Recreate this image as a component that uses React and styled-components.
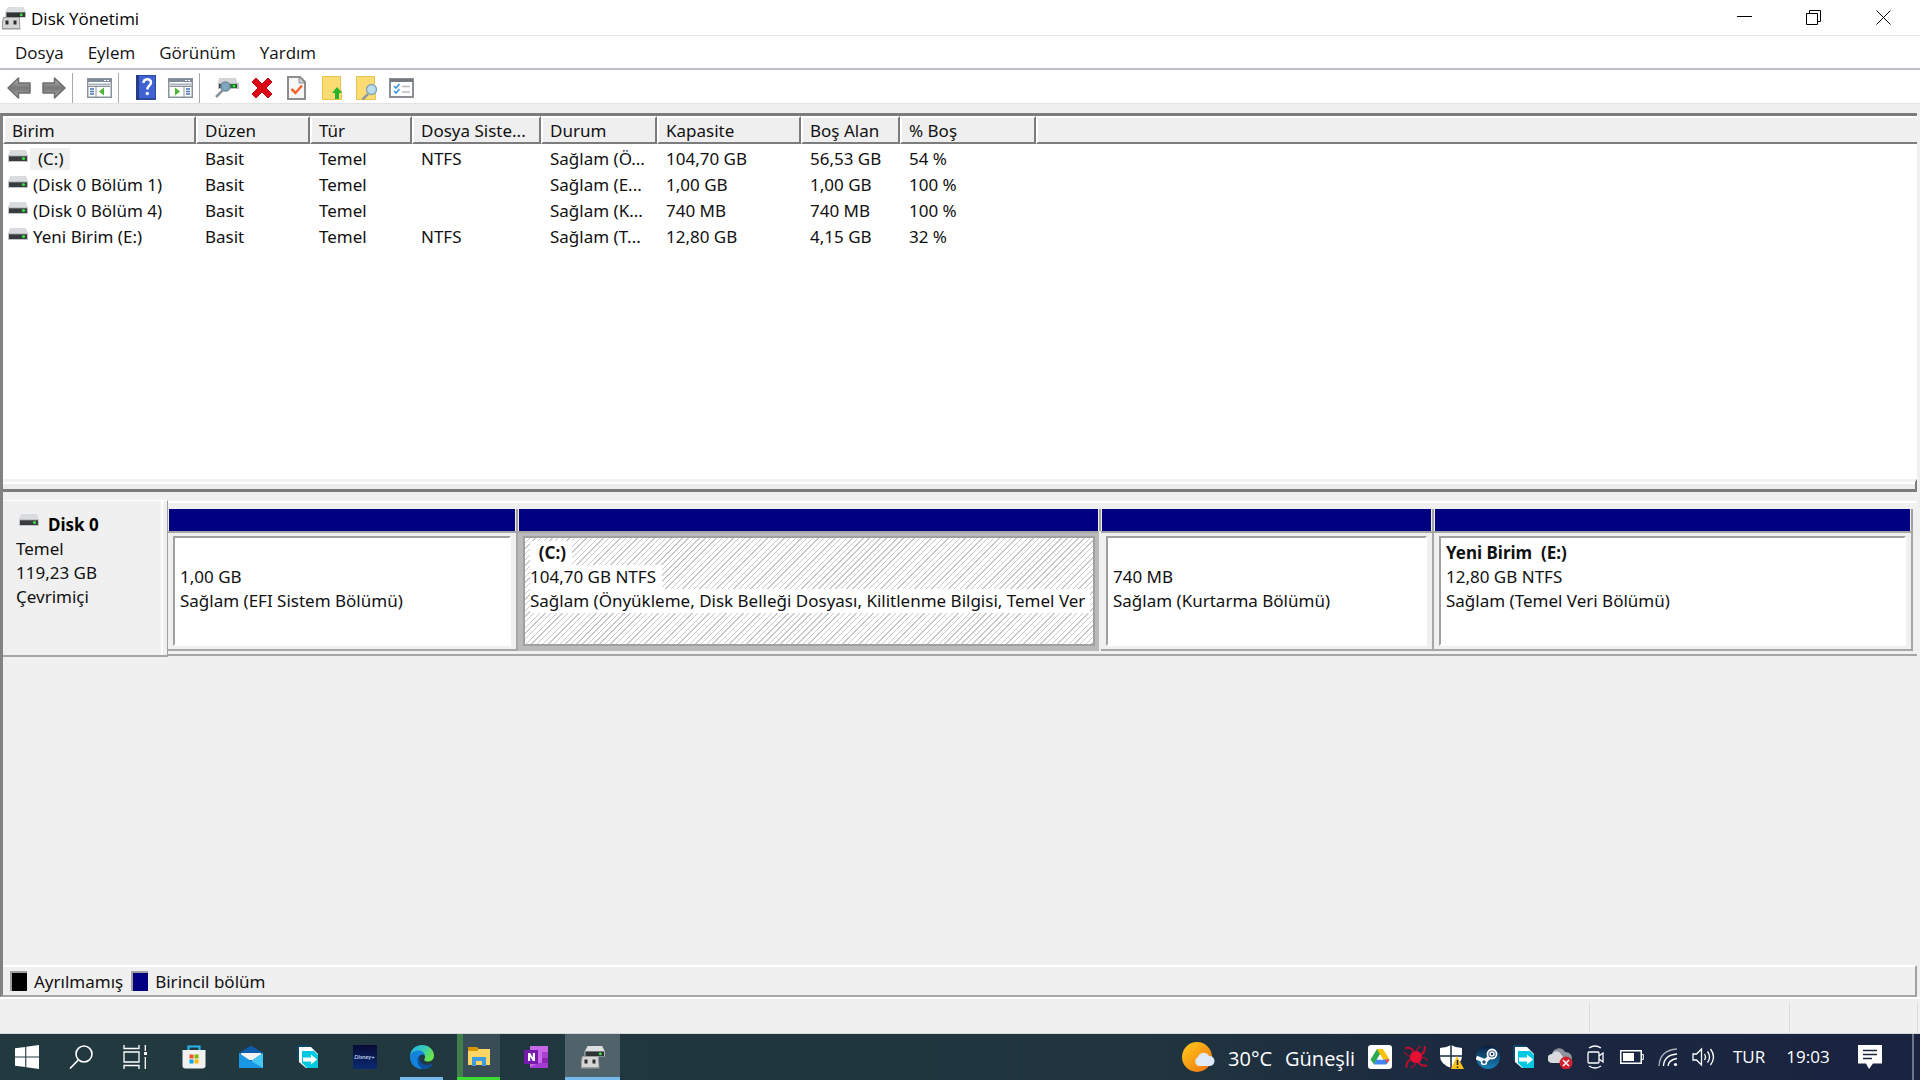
import React from "react";
import styled, { createGlobalStyle } from "styled-components";

const GlobalStyle = createGlobalStyle`
  * {
    box-sizing: border-box;
  }
  body {
    margin: 0;
    background: #f0f0f0;
    color: #111;
    font-family: "Open Sans", "Noto Sans", sans-serif;
    font-size: 17px;
    line-height: 24px;
  }
  button {
    font: inherit;
    color: inherit;
    border: none;
    background: none;
    padding: 0;
  }
  svg {
    display: block;
  }
`;

const Desktop = styled.div`
  display: flex;
  flex-direction: column;
  min-height: 100vh;
`;

const Window = styled.main`
  display: flex;
  flex-direction: column;
  flex: 1;
`;

const TitleBar = styled.header`
  display: flex;
  align-items: center;
  height: 36px;
  padding: 0 1px 0 2px;
  background: #fff;
  border-bottom: 1px solid #e6e6e6;
`;

const Title = styled.h1`
  flex: 1;
  margin: 0 0 0 5px;
  padding-top: 2px;
  font-size: 17px;
  font-weight: 400;
  color: #000;
`;

const WindowButton = styled.button`
  display: flex;
  align-items: center;
  justify-content: center;
  width: 70px;
  height: 34px;
`;

const MenuBar = styled.nav`
  display: flex;
  gap: 24px;
  height: 34px;
  padding: 1px 15px 0;
  background: #fff;
  border-bottom: 2px solid #bcc0c4;
`;

const ToolBar = styled.div`
  display: flex;
  align-items: center;
  height: 34px;
  padding: 2px 0 0 1px;
  background: #fff;
  border-bottom: 1px solid #e2e2e2;
`;

const ToolButton = styled.button`
  display: flex;
  align-items: center;
  justify-content: center;
  width: 35px;
  height: 30px;
`;

const ToolSeparator = styled.span`
  width: 1px;
  height: 30px;
  margin: 0 9px 0 1px;
  background: #a8a8a8;
`;

const Workspace = styled.div`
  display: flex;
  flex-direction: column;
  flex: 1;
  margin: 9px 3px 0 0;
  border-top: 3px solid #7c7c7c;
  border-left: 3px solid #828282;
  border-bottom: 2px solid #a6a6a6;
  font-family: "Noto Sans", "Open Sans", sans-serif;
`;

const ListPane = styled.section`
  flex: 367 1 0;
  background: #fff;
`;

const VolumeTable = styled.table`
  width: 100%;
  table-layout: fixed;
  border-collapse: separate;
  border-spacing: 0;
  text-align: left;
  line-height: 22px;

  th {
    height: 28px;
    padding: 2px 0 0 7px;
    font-weight: 400;
    background: #efefef;
    border-top: 2px solid #fff;
    border-left: 2px solid #fff;
    border-right: 2px solid #7c7c7c;
    border-bottom: 2px solid #7c7c7c;
    white-space: nowrap;
  }
  th:last-child {
    border-right: none;
  }
  td {
    height: 26px;
    padding: 3px 0 0 9px;
    white-space: nowrap;
  }
  td:first-child {
    padding-left: 5px;
  }
`;

const VolumeName = styled.div`
  display: flex;
  align-items: center;
  gap: 2px;

  svg {
    margin-bottom: 4px;
  }
`;

const VolumeLabel = styled.span`
  padding: ${(p) => (p.$selected ? "0 6px 0 8px" : "0 3px")};
  background: ${(p) => (p.$selected ? "#f0f0f0" : "none")};
`;

const Splitter = styled.div`
  height: 13px;
  background: #ececec;
  border-top: 3px solid #f2f2f2;
  border-right: 2px solid #7c7c7c;
  border-bottom: 3px solid #7c7c7c;
  box-shadow: inset 0 2px #fff;
`;

const GraphPane = styled.section`
  display: flex;
  flex-direction: column;
  flex: 501 1 0;
  padding-top: 8px;
`;

const DiskRow = styled.div`
  display: flex;
`;

const DiskInfo = styled.div`
  width: 165px;
  height: 157px;
  padding: 10px 0 0 13px;
  border-top: 1px solid #fff;
  border-right: 1px solid #a0a0a0;
  border-bottom: 2px solid #a6a6a6;
  box-shadow: inset -4px 0 #f0f0f0, inset -6px 0 #fff;
`;

const DiskName = styled.div`
  display: flex;
  align-items: center;
  gap: 9px;
  padding-left: 3px;
  margin-top: 2px;
  font-weight: 700;
  color: #000;

  svg {
    margin-bottom: 8px;
  }
`;

const Partitions = styled.div`
  display: flex;
  flex: 1;
  min-width: 0;
  height: 155px;
  margin: 1px 0;
  padding: 6px 4px 0 0;
  border-top: 2px solid #fff;
  border-bottom: 2px solid #a6a6a6;
`;

const Partition = styled.div`
  display: flex;
  flex-direction: column;
  flex: ${(p) => p.$share} 1 0;
  min-width: 0;
`;

const PartitionBar = styled.div`
  height: 22px;
  margin-left: 1px;
  background: #000080;
  border-right: 2px solid #a0a0a0;
  box-shadow: inset -1px 0 #f0f0f0;
`;

const PartitionFrame = styled.div`
  height: 120px;
  margin-right: ${(p) => (p.$selected ? "2px" : "0")};
  padding: ${(p) => (p.$selected ? "3px 2px 5px 5px" : "3px 5px 5px")};
  background: ${(p) => (p.$selected ? "#bababa" : "#f0f0f0")};
  border-top: 2px solid #a6a6a6;
  border-right: 2px solid ${(p) => (p.$selected ? "#bababa" : "#a6a6a6")};
  border-bottom: 2px solid ${(p) => (p.$selected ? "#bababa" : "#a6a6a6")};
`;

const PartitionBody = styled.div`
  height: 110px;
  padding: 3px 3px 0 5px;
  overflow: hidden;
  border: 2px solid #a0a0a0;
  border-right-color: ${(p) => (p.$selected ? "#a0a0a0" : "#fff")};
  border-bottom-color: ${(p) => (p.$selected ? "#a0a0a0" : "#fff")};
  background: ${(p) =>
    p.$selected
      ? "repeating-linear-gradient(135deg, #fff 0 3px, #c8c8c8 3px 4px)"
      : "#fff"};
`;

const PartitionLine = styled.div`
  height: 24px;
  overflow: hidden;
  white-space: pre;
  font-weight: ${(p) => (p.$bold ? 700 : 400)};

  span {
    display: inline-block;
    padding-right: 6px;
    background: #fff;
  }
`;

const Legend = styled.div`
  display: flex;
  align-items: center;
  gap: 8px;
  height: 30px;
  margin-top: auto;
  padding: 2px 0 0 7px;
  border-top: 2px solid #fff;
  border-right: 2px solid #a0a0a0;
`;

const LegendItem = styled.span`
  display: flex;
  align-items: center;
  gap: 7px;
`;

const Swatch = styled.i`
  width: 17px;
  height: 20px;
  margin-bottom: 3px;
  border-top: 2px solid #a0a0a0;
  border-left: 2px solid #a0a0a0;
  background: ${(p) => p.$color};
`;

const StatusBar = styled.footer`
  display: grid;
  grid-template-columns: 1fr 200px 128px;
  height: 37px;
  padding: 5px 2px 0 0;
  border-bottom: 1px solid #d8d8d8;
  box-shadow: inset 0 2px #fff;

  span {
    border-right: 1px solid #dcdcdc;
  }
`;

const TaskBar = styled.div`
  display: flex;
  justify-content: space-between;
  height: 46px;
  color: #fff;
  background: linear-gradient(90deg, #22393f, #20353f 60%, #1b2840 78%, #1a2340);
`;

const TaskGroup = styled.div`
  display: flex;
`;

const PinnedApps = styled(TaskGroup)`
  margin-left: 3px;
`;

const SystemButton = styled.button`
  display: flex;
  align-items: center;
  justify-content: center;
  width: 54px;
  height: 46px;
`;

const AppButton = styled.button`
  display: flex;
  align-items: center;
  justify-content: center;
  width: ${(p) => (p.$active ? "55px" : "43px")};
  height: 46px;
  margin: ${(p) => (p.$active ? "0 1px" : "0 7px")};
  padding-top: ${(p) => (p.$running ? "3px" : "0")};
  border-bottom: ${(p) => (p.$running ? "3px solid #76b9ed" : "none")};
  background: ${(p) => (p.$active ? "#50636a" : "none")};
`;

const ProgressButton = styled(AppButton)`
  padding-left: 1px;
  border-bottom-color: #3ddc35;
  background: linear-gradient(90deg, #407e4c 6px, #394d56 6px);
`;

const Tray = styled.div`
  display: flex;
  align-items: center;
`;

const Weather = styled.button`
  display: flex;
  align-items: center;
  gap: 13px;
  margin-right: 7px;
  font-size: 20px;

  span {
    padding-top: 3px;
  }
`;

const TrayButton = styled.button`
  display: flex;
  align-items: center;
  justify-content: center;
  width: 36px;
  height: 46px;
`;

const TrayText = styled.button`
  width: ${(p) => p.$width}px;
  height: 46px;
  text-align: center;
`;

const Notifications = styled(TrayButton)`
  width: 60px;
  margin-right: 12px;
`;

const ShowDesktop = styled.button`
  width: 8px;
  height: 46px;
  border-left: 2px solid #6d7488;
`;

const DriveIcon = () => (
  <svg width="20" height="13" viewBox="0 0 20 13">
    <path d="M2 0h16l2 6H0z" fill="#d9dbde" />
    <path d="M0 5h20v7H0z" fill="#c2c5c8" />
    <path d="M1 6h18v5H1z" fill="#393c3e" />
    <path d="M1 6h18v1H1z" fill="#606365" />
    <circle cx="15.500" cy="8.500" r="1.600" fill="#31e33b" />
  </svg>
);

const DiskManagerIcon = () => (
  <svg width="24" height="24" viewBox="0 0 24 24">
    <path d="M6.500 1h14.500l3 5.500v5H3.500v-5z" fill="#b4b6b8" />
    <path d="M7 1h14l2.500 5h-19z" fill="#dcdee0" />
    <path d="M4.500 6.500h18.500v4.500H4.500z" fill="#303335" />
    <circle cx="19.300" cy="8.800" r="1.500" fill="#35df3d" />
    <path d="M1 11h17v5l.5 7.500H0V16z" fill="#9d9d9d" />
    <path d="M2 12h15v5l.5 5H1v-5z" fill="#d6d6d6" />
    <path d="M3.500 14.500h3v4h-3zM11.500 14.500h3v4h-3z" fill="#2d2d2d" />
  </svg>
);

const ArrowIcon = ({ right }) => (
  <svg width="24" height="22" viewBox="0 0 24 22">
    <defs>
      <linearGradient id={right ? "arrowR" : "arrowL"} x1="0" y1="0" x2="0" y2="1">
        <stop offset="0" stopColor="#b5b5b5" />
        <stop offset="0.500" stopColor="#777" />
        <stop offset="1" stopColor="#aaa" />
      </linearGradient>
    </defs>
    <path
      d={right ? "M23 11L12.500 1v5H1v10h11.500v5z" : "M1 11L11.500 1v5H23v10H11.500v5z"}
      fill={`url(#${right ? "arrowR" : "arrowL"})`}
      stroke="#6e6e6e"
      strokeWidth="1.500"
      strokeLinejoin="round"
    />
  </svg>
);

const ConsoleIcon = ({ right }) => (
  <svg width="25" height="20" viewBox="0 0 25 20">
    <path d="M.75.750h23.500v18.500H.75z" fill="#fff" stroke="#8b929b" strokeWidth="1.500" />
    <path d="M1 1h23v3H1z" fill="#7f8b9b" />
    <path d="M2 6.500h21" stroke="#a9b2bd" strokeWidth="2" />
    <path d="M17 2h2v1h-2zM20 2h2v1h-2z" fill="#fff" />
    {right ? (
      <g>
        <path d="M16 8v11M2 8.500h22" stroke="#8b929b" />
        <path d="M18 11h4M18 13.500h4M18 16h4" stroke="#3f76b5" strokeWidth="1.500" />
        <path d="M7 9.500v8l5-4z" fill="#4cb62e" />
      </g>
    ) : (
      <g>
        <path d="M9 8v11M1 8.500h22" stroke="#8b929b" />
        <path d="M3 11h4M3 13.500h4M3 16h4" stroke="#3f76b5" strokeWidth="1.500" />
        <path d="M17 9.500v8l-5-4z" fill="#4cb62e" />
      </g>
    )}
  </svg>
);

const HelpIcon = () => (
  <svg width="20" height="25" viewBox="0 0 20 25">
    <path d="M0 0h20v25H0z" fill="#2c4a9e" />
    <path d="M3 1h16v22H3z" fill="#3f62d2" />
    <path d="M0 0h3v25H0z" fill="#243c88" />
    <path
      d="M7.500 8c0-5 7.500-5 7.500-.5 0 3-3.700 3.500-3.700 7"
      fill="none"
      stroke="#fff"
      strokeWidth="2.500"
    />
    <circle cx="11.300" cy="18.500" r="1.700" fill="#fff" />
  </svg>
);

const RescanIcon = () => (
  <svg width="24" height="21" viewBox="0 0 24 21">
    <path d="M4 1h17l2 6H3z" fill="#d2d4d6" />
    <path d="M3 6h21v6H3z" fill="#bfc2c4" />
    <path d="M4 7h18v4H4z" fill="#3b3f42" />
    <path d="M16 7h5v4h-5z" fill="#1f7d2b" />
    <path d="M18 8h2v2h-2z" fill="#38ef45" />
    <path d="M7.500 13.500L1 20" stroke="#8b9298" strokeWidth="2.500" />
    <circle cx="10.500" cy="9.500" r="4.500" fill="#7fa6bd" stroke="#6d8b9c" strokeWidth="1.500" />
  </svg>
);

const DeleteIcon = () => (
  <svg width="22" height="22" viewBox="0 0 22 22">
    <path
      d="M5 1l6 6 6-6 4 4-6 6 6 6-4 4-6-6-6 6-4-4 6-6-6-6z"
      fill="#dc0a14"
      stroke="#b80710"
    />
  </svg>
);

const CheckPageIcon = () => (
  <svg width="19" height="24" viewBox="0 0 19 24">
    <path d="M1 1h12l5 5v17H1z" fill="#f7f7f7" stroke="#8d8d8d" strokeWidth="2" />
    <path d="M12 1v6h6z" fill="#d2d2d2" stroke="#8d8d8d" />
    <path d="M4.500 13l4 4L15 9.500" fill="none" stroke="#f4622d" strokeWidth="2.500" />
  </svg>
);

const UpFolderIcon = () => (
  <svg width="20" height="24" viewBox="0 0 20 24">
    <path d="M.5.500h18v14h1v9H.5z" fill="#fbdc72" stroke="#e6c24e" />
    <path d="M15 11l5 6h-3v6h-4v-6h-3z" fill="#27b32c" />
  </svg>
);

const FindFolderIcon = () => (
  <svg width="22" height="24" viewBox="0 0 22 24">
    <path d="M.5.500h18v14h1v9H.5z" fill="#fbdc72" stroke="#e6c24e" />
    <path d="M12 18l-5.500 5.500" stroke="#8f9aa0" strokeWidth="2.500" />
    <circle cx="15.500" cy="13.500" r="5" fill="#b9def0" stroke="#8ba7b5" strokeWidth="1.500" />
  </svg>
);

const ChecklistIcon = () => (
  <svg width="25" height="20" viewBox="0 0 25 20">
    <path d="M1 1h23v18H1z" fill="#fff" stroke="#8b8f94" strokeWidth="2" />
    <path d="M1 2.500h23" stroke="#747a80" strokeWidth="3" />
    <path d="M5 8l2 2 3.500-4M5 13l2 2 3.500-4" fill="none" stroke="#3a92e0" strokeWidth="1.600" />
    <path d="M13 8.500h8M13 14h8" stroke="#bbb" strokeWidth="1.500" />
  </svg>
);

const MinimizeIcon = () => (
  <svg width="16" height="16" viewBox="0 0 16 16">
    <path d="M1 6.500h15" stroke="#000" />
  </svg>
);

const RestoreIcon = () => (
  <svg width="16" height="16" viewBox="0 0 16 16" fill="none" stroke="#000">
    <path d="M.5 3.500h11v11H.5zM3.500 3.500v-3h11v11h-3" />
  </svg>
);

const CloseIcon = () => (
  <svg width="16" height="16" viewBox="0 0 16 16">
    <path d="M.5.500l14 14M14.500.500l-14 14" stroke="#000" />
  </svg>
);

const StartIcon = () => (
  <svg width="24" height="24" viewBox="0 0 24 24" fill="#fff">
    <path d="M0 3.300L10.200 2v9.500H0zM11.300 1.800L24 0v11.500H11.300zM0 12.500h10.200V22L0 20.700zM11.300 12.500H24V24l-12.700-1.800z" />
  </svg>
);

const SearchIcon = () => (
  <svg width="24" height="24" viewBox="0 0 24 24" fill="none" stroke="#fff" strokeWidth="1.600">
    <circle cx="15" cy="9" r="8" />
    <path d="M9.500 14.700L1 23.500" />
  </svg>
);

const TaskViewIcon = () => (
  <svg width="24" height="24" viewBox="0 0 24 24" fill="none" stroke="#fff" strokeWidth="1.300">
    <path d="M1 0v3.500h15V0M1 7h15v10H1zM1 24v-3.500h15V24M22.300 0v6M22.300 12v12" />
    <path d="M21 7h3v3h-3z" fill="#fff" stroke="none" />
  </svg>
);

const StoreIcon = () => (
  <svg width="24" height="24" viewBox="0 0 24 24">
    <path d="M6.500 6V1.500h11V6" fill="none" stroke="#27b5ee" strokeWidth="2.200" />
    <path d="M.5 5h23v15.500q0 3-3 3h-17q-3 0-3-3z" fill="#f1f1f1" />
    <path d="M7.500 9.500h4v4h-4z" fill="#f25022" />
    <path d="M12.500 9.500h4v4h-4z" fill="#7fba00" />
    <path d="M7.500 14.500h4v4h-4z" fill="#00a4ef" />
    <path d="M12.500 14.500h4v4h-4z" fill="#ffb900" />
  </svg>
);

const MailIcon = () => (
  <svg width="24" height="24" viewBox="0 0 24 24">
    <path d="M0 8l12-7.500L24 8v6H0z" fill="#0b5cad" />
    <path d="M2 8h20v7H2z" fill="#f2f2f2" />
    <path d="M0 8l12 8L24 8v15H0z" fill="#1b96e2" />
    <path d="M12 16l12-8v15z" fill="#45c8f5" />
  </svg>
);

const TransferIcon = () => (
  <svg width="24" height="24" viewBox="0 0 24 24">
    <path d="M1 0h12l6 5H7v13H4l-3-4z" fill="#0b4868" />
    <path d="M3 2h12l7 7v14H10l-7-6z" fill="#fff" />
    <path d="M6 6h12l4 4v13H11l-5-5z" fill="#00c8e0" />
    <path d="M7 12.500h8V9.500l6 5-6 5v-3H7z" fill="#fff" />
  </svg>
);

const DisneyLabel = styled.span`
  display: flex;
  flex-direction: column;
  justify-content: center;
  width: 24px;
  height: 24px;
  background: linear-gradient(#080a35, #0b2a72);
  color: #dbe9ff;
  font-family: Lato, sans-serif;
  font-size: 6px;
  font-style: italic;
  line-height: 8px;
  text-align: center;
`;

const EdgeIcon = () => (
  <svg width="24" height="24" viewBox="0 0 24 24">
    <defs>
      <linearGradient id="edgeTop" x1="0" y1="0" x2="1" y2="0.500">
        <stop offset="0" stopColor="#2bb4e8" />
        <stop offset="0.500" stopColor="#32c8c0" />
        <stop offset="1" stopColor="#6be34a" />
      </linearGradient>
    </defs>
    <path d="M0 12C0 5 5 0 12 0s12 5 12 10.500c0 4-3 6-6 6-3.500 0-4.500-1.500-3.300-3C16 11 14 7.500 9.500 7.500 5 7.500 1 10 0 12z" fill="url(#edgeTop)" />
    <path d="M0 12c0-4 4-6.500 8.500-6.500 4 0 6.500 2.500 6.500 5.500-1-1.500-3.500-2-5-.5-3 3-1.500 8.500 3 10.500 3 1.300 6.500.7 9.500-1.500C20 22.500 16.500 24 12 24 5 24 0 18.500 0 12z" fill="#1384db" />
    <path d="M7.500 15c0-2.500 1-4 2.500-4.500-2 5 2.500 9.500 7 9.500 2.500 0 4.500-1 5.500-.5-2 3-6 4.500-9.500 4.500-3.500-1.500-5.500-5-5.500-9z" fill="#0c4f9e" />
  </svg>
);

const ExplorerIcon = () => (
  <svg width="22" height="20" viewBox="0 0 22 20">
    <path d="M0 0h9l2 2v3H0z" fill="#d99504" />
    <path d="M0 4h9l2-2h11v16H0z" fill="#ffd564" />
    <path d="M4 19v-9h14v9h-4v-5H8v5z" fill="#3f9be0" />
  </svg>
);

const OneNoteIcon = () => (
  <svg width="24" height="24" viewBox="0 0 24 24">
    <path d="M6 1h18v22H6z" fill="#c867e8" />
    <path d="M18 7h6v6h-6z" fill="#a941d0" />
    <path d="M18 13h6v5h-6z" fill="#8a27b5" />
    <path d="M15 18h9v5H6v-1z" fill="#a23bd0" />
    <path d="M0 5h14v14H0z" fill="#7719aa" />
    <path d="M4 8h2.200l2.600 4.600V8H11v8H8.800L6.200 11.400V16H4z" fill="#fff" />
  </svg>
);

const WeatherIcon = () => (
  <svg width="33" height="30" viewBox="0 0 33 30">
    <defs>
      <linearGradient id="sun" x1="0" y1="0" x2="1" y2="1">
        <stop offset="0" stopColor="#ffcc1c" />
        <stop offset="1" stopColor="#f0700e" />
      </linearGradient>
    </defs>
    <circle cx="15" cy="15" r="15" fill="url(#sun)" />
    <path d="M16 24a5 5 0 010-9 6 6 0 0111-1 5 5 0 011 10z" fill="#dfe9f8" />
  </svg>
);

const DriveTrayIcon = () => (
  <svg width="24" height="24" viewBox="0 0 24 24">
    <rect width="24" height="24" rx="3" fill="#fff" />
    <path d="M9 4h6L6 19.500l-3.500-5z" fill="#2da94f" />
    <path d="M9 4h6l6.500 10.500h-6.500z" fill="#ffc107" />
    <path d="M8.500 14.500h13l-3 5H6z" fill="#4285f4" />
    <path d="M17 14.500h4.500l-2.500 4z" fill="#ea4335" />
    <path d="M12 9.500l3 5H9z" fill="#fff" />
  </svg>
);

const RedTrayIcon = () => (
  <svg width="24" height="24" viewBox="0 0 24 24">
    <path
      d="M1 3.500q5-2.500 9 3M20.500 1q1.500 5-3.500 9M23 20q-5 2.500-9-3M2.500 22.500Q2 17 7 14"
      fill="none"
      stroke="#c20d31"
      strokeWidth="2"
    />
    <path
      d="M0 7q4 4 7 5M17 1q-4 2-5 6M24 16q-3-4-7-4M7 23q4-2 5-6"
      fill="none"
      stroke="#8f1432"
      strokeWidth="1.500"
    />
    <circle cx="12" cy="12" r="6" fill="#e60f34" />
  </svg>
);

const ShieldIcon = () => (
  <svg width="24" height="24" viewBox="0 0 24 24">
    <path d="M0 3q6 0 11-3 5 3 11 3v8q0 8-11 12Q0 19 0 11z" fill="#fff" />
    <path d="M11 0v23M0 11h22" stroke="#1c2b3f" strokeWidth="1.500" />
    <path d="M17 11l7 13H11z" fill="#ffc21a" />
    <path d="M17.500 15v5M17.500 21.500v1.500" stroke="#222" strokeWidth="1.500" />
  </svg>
);

const SteamIcon = () => (
  <svg width="24" height="24" viewBox="0 0 24 24">
    <defs>
      <linearGradient id="steam" x1="0" y1="0" x2="0" y2="1">
        <stop offset="0" stopColor="#0c1c3c" />
        <stop offset="1" stopColor="#1783b8" />
      </linearGradient>
    </defs>
    <circle cx="12" cy="12" r="12" fill="url(#steam)" />
    <path d="M.3 12.500l8 3.500M8 17l7-6" fill="none" stroke="#fff" strokeWidth="4" />
    <circle cx="16" cy="9" r="4.500" fill="#14345c" stroke="#fff" strokeWidth="1.800" />
    <circle cx="16" cy="9" r="2" fill="none" stroke="#fff" strokeWidth="1.500" />
    <circle cx="8" cy="17" r="2.500" fill="#17527f" stroke="#fff" strokeWidth="1.500" />
  </svg>
);

const CloudErrorIcon = () => (
  <svg width="25" height="24" viewBox="0 0 25 24">
    <path d="M4 16V9a7 7 0 0113-2 6 6 0 016 9z" fill="#8e939d" />
    <path d="M4 18a4 4 0 010-9 5 5 0 019 0l6 9z" fill="#d8dade" />
    <circle cx="18" cy="18" r="6.500" fill="#d2202f" />
    <path d="M15 15l6 6M21 15l-6 6" stroke="#fff" strokeWidth="1.500" />
  </svg>
);

const MeetIcon = () => (
  <svg width="18" height="24" viewBox="0 0 18 24" fill="none" stroke="#fff" strokeWidth="1.300">
    <path d="M2 3q6-4 12 0M2 21q6 4 12 0" />
    <rect x="1" y="7" width="11" height="11" rx="1" />
    <path d="M12 11l4-3v9l-4-3" />
  </svg>
);

const BatteryIcon = () => (
  <svg width="24" height="14" viewBox="0 0 24 14">
    <path d="M.75.750h20.500v12.500H.75z" fill="none" stroke="#fff" strokeWidth="1.500" />
    <path d="M3 3h11v8H3z" fill="#fff" />
    <path d="M21.500 4.500H23.300v5h-1.800" fill="none" stroke="#fff" />
  </svg>
);

const WifiIcon = () => (
  <svg width="20" height="20" viewBox="0 0 20 20" fill="none" stroke="#fff" strokeWidth="1.300">
    <path d="M1 19Q2 3 19 2" stroke="#a9b0bd" />
    <path d="M5.500 19Q6 8 19 7M10 19q.5-6 9-7.500" />
    <circle cx="17.500" cy="17.500" r="1.600" fill="#fff" stroke="none" />
  </svg>
);

const VolumeIcon = () => (
  <svg width="24" height="20" viewBox="0 0 24 20" fill="none" stroke="#fff" strokeWidth="1.300">
    <path d="M1 7h3.500l5-5v16l-5-5H1z" />
    <path d="M12.500 7q2 3 0 6M15.500 4.500q4 5.500 0 11M18.500 2q6 8 0 16" />
  </svg>
);

const NotificationIcon = () => (
  <svg width="24" height="24" viewBox="0 0 24 24">
    <path d="M0 0h24v18.500h-9L11 24l-3-5.500H0z" fill="#fff" />
    <path d="M5 5.500h14M5 9.500h14M5 13.500h9" stroke="#1a2640" strokeWidth="1.500" />
  </svg>
);

const menus = ["Dosya", "Eylem", "Görünüm", "Yardım"];

const columns = [
  { title: "Birim", width: 193 },
  { title: "Düzen", width: 114 },
  { title: "Tür", width: 102 },
  { title: "Dosya Siste...", width: 129 },
  { title: "Durum", width: 116 },
  { title: "Kapasite", width: 144 },
  { title: "Boş Alan", width: 99 },
  { title: "% Boş", width: 136 },
];

const volumes = [
  ["(C:)", "Basit", "Temel", "NTFS", "Sağlam (Ö...", "104,70 GB", "56,53 GB", "54 %"],
  ["(Disk 0 Bölüm 1)", "Basit", "Temel", "", "Sağlam (E...", "1,00 GB", "1,00 GB", "100 %"],
  ["(Disk 0 Bölüm 4)", "Basit", "Temel", "", "Sağlam (K...", "740 MB", "740 MB", "100 %"],
  ["Yeni Birim (E:)", "Basit", "Temel", "NTFS", "Sağlam (T...", "12,80 GB", "4,15 GB", "32 %"],
];

const partitions = [
  { name: "", size: "1,00 GB", status: "Sağlam (EFI Sistem Bölümü)", share: 350 },
  {
    name: "  (C:)",
    size: "104,70 GB NTFS",
    status: "Sağlam (Önyükleme, Disk Belleği Dosyası, Kilitlenme Bilgisi, Temel Ver",
    share: 583,
    selected: true,
  },
  { name: "", size: "740 MB", status: "Sağlam (Kurtarma Bölümü)", share: 333 },
  { name: "Yeni Birim  (E:)", size: "12,80 GB NTFS", status: "Sağlam (Temel Veri Bölümü)", share: 479 },
];

const trayIcons = [
  { label: "Google Drive", icon: <DriveTrayIcon /> },
  { label: "Virüsten koruma", icon: <RedTrayIcon /> },
  { label: "Windows Güvenliği", icon: <ShieldIcon /> },
  { label: "Steam", icon: <SteamIcon /> },
  { label: "Aktarım", icon: <TransferIcon /> },
  { label: "OneDrive", icon: <CloudErrorIcon /> },
  { label: "Şimdi Toplan", icon: <MeetIcon /> },
  { label: "Pil", icon: <BatteryIcon /> },
  { label: "Ağ", icon: <WifiIcon /> },
  { label: "Ses", icon: <VolumeIcon /> },
];

const App = () => {
  return (
    <Desktop>
      <GlobalStyle />
      <Window>
        <TitleBar>
          <DiskManagerIcon />
          <Title>Disk Yönetimi</Title>
          <WindowButton aria-label="Simge durumuna küçült">
            <MinimizeIcon />
          </WindowButton>
          <WindowButton aria-label="Geri yükle">
            <RestoreIcon />
          </WindowButton>
          <WindowButton aria-label="Kapat">
            <CloseIcon />
          </WindowButton>
        </TitleBar>

        <MenuBar>
          {menus.map((menu) => (
            <button key={menu}>{menu}</button>
          ))}
        </MenuBar>

        <ToolBar>
          <ToolButton aria-label="Geri">
            <ArrowIcon />
          </ToolButton>
          <ToolButton aria-label="İleri">
            <ArrowIcon right />
          </ToolButton>
          <ToolSeparator />
          <ToolButton aria-label="Konsol ağacı">
            <ConsoleIcon />
          </ToolButton>
          <ToolSeparator />
          <ToolButton aria-label="Yardım">
            <HelpIcon />
          </ToolButton>
          <ToolButton aria-label="Eylem bölmesi">
            <ConsoleIcon right />
          </ToolButton>
          <ToolSeparator />
          <ToolButton aria-label="Yeniden tara">
            <RescanIcon />
          </ToolButton>
          <ToolButton aria-label="Sil">
            <DeleteIcon />
          </ToolButton>
          <ToolButton aria-label="Özellikler">
            <CheckPageIcon />
          </ToolButton>
          <ToolButton aria-label="Aç">
            <UpFolderIcon />
          </ToolButton>
          <ToolButton aria-label="Araştır">
            <FindFolderIcon />
          </ToolButton>
          <ToolButton aria-label="Ayarlar">
            <ChecklistIcon />
          </ToolButton>
        </ToolBar>

        <Workspace>
          <ListPane>
            <VolumeTable>
              <colgroup>
                {columns.map((column) => (
                  <col key={column.title} width={column.width} />
                ))}
                <col />
              </colgroup>
              <thead>
                <tr>
                  {columns.map((column) => (
                    <th key={column.title}>{column.title}</th>
                  ))}
                  <th />
                </tr>
              </thead>
              <tbody>
                {volumes.map(([name, ...cells], index) => (
                  <tr key={name}>
                    <td>
                      <VolumeName>
                        <DriveIcon />
                        <VolumeLabel $selected={index === 0}>{name}</VolumeLabel>
                      </VolumeName>
                    </td>
                    {cells.map((cell, i) => (
                      <td key={i}>{cell}</td>
                    ))}
                    <td />
                  </tr>
                ))}
              </tbody>
            </VolumeTable>
          </ListPane>

          <Splitter />

          <GraphPane>
            <DiskRow>
              <DiskInfo>
                <DiskName>
                  <DriveIcon />
                  Disk 0
                </DiskName>
                <div>Temel</div>
                <div>119,23 GB</div>
                <div>Çevrimiçi</div>
              </DiskInfo>
              <Partitions>
                {partitions.map((partition) => (
                  <Partition key={partition.status} $share={partition.share}>
                    <PartitionBar />
                    <PartitionFrame $selected={partition.selected}>
                      <PartitionBody $selected={partition.selected}>
                        <PartitionLine $bold>
                          <span>{partition.name}</span>
                        </PartitionLine>
                        <PartitionLine>
                          <span>{partition.size}</span>
                        </PartitionLine>
                        <PartitionLine>
                          <span>{partition.status}</span>
                        </PartitionLine>
                      </PartitionBody>
                    </PartitionFrame>
                  </Partition>
                ))}
              </Partitions>
            </DiskRow>

            <Legend>
              <LegendItem>
                <Swatch $color="#000" />
                Ayrılmamış
              </LegendItem>
              <LegendItem>
                <Swatch $color="#000080" />
                Birincil bölüm
              </LegendItem>
            </Legend>
          </GraphPane>
        </Workspace>

        <StatusBar>
          <span />
          <span />
          <span />
        </StatusBar>
      </Window>

      <TaskBar>
        <TaskGroup>
          <SystemButton aria-label="Başlat">
            <StartIcon />
          </SystemButton>
          <SystemButton aria-label="Ara">
            <SearchIcon />
          </SystemButton>
          <SystemButton aria-label="Görev görünümü">
            <TaskViewIcon />
          </SystemButton>
          <PinnedApps>
            <AppButton aria-label="Microsoft Store">
              <StoreIcon />
            </AppButton>
            <AppButton aria-label="Posta">
              <MailIcon />
            </AppButton>
            <AppButton aria-label="Aktarım">
              <TransferIcon />
            </AppButton>
            <AppButton>
              <DisneyLabel>Disney+</DisneyLabel>
            </AppButton>
            <AppButton $running aria-label="Microsoft Edge">
              <EdgeIcon />
            </AppButton>
            <ProgressButton $running aria-label="Dosya Gezgini">
              <ExplorerIcon />
            </ProgressButton>
            <AppButton aria-label="OneNote">
              <OneNoteIcon />
            </AppButton>
            <AppButton $running $active aria-label="Disk Yönetimi">
              <DiskManagerIcon />
            </AppButton>
          </PinnedApps>
        </TaskGroup>

        <Tray>
          <Weather>
            <WeatherIcon />
            <span>30°C</span>
            <span>Güneşli</span>
          </Weather>
          {trayIcons.map((item) => (
            <TrayButton key={item.label} aria-label={item.label}>
              {item.icon}
            </TrayButton>
          ))}
          <TrayText $width={54}>TUR</TrayText>
          <TrayText $width={64}>19:03</TrayText>
          <Notifications aria-label="Bildirimler">
            <NotificationIcon />
          </Notifications>
          <ShowDesktop aria-label="Masaüstünü göster" />
        </Tray>
      </TaskBar>
    </Desktop>
  );
};

export default App;
